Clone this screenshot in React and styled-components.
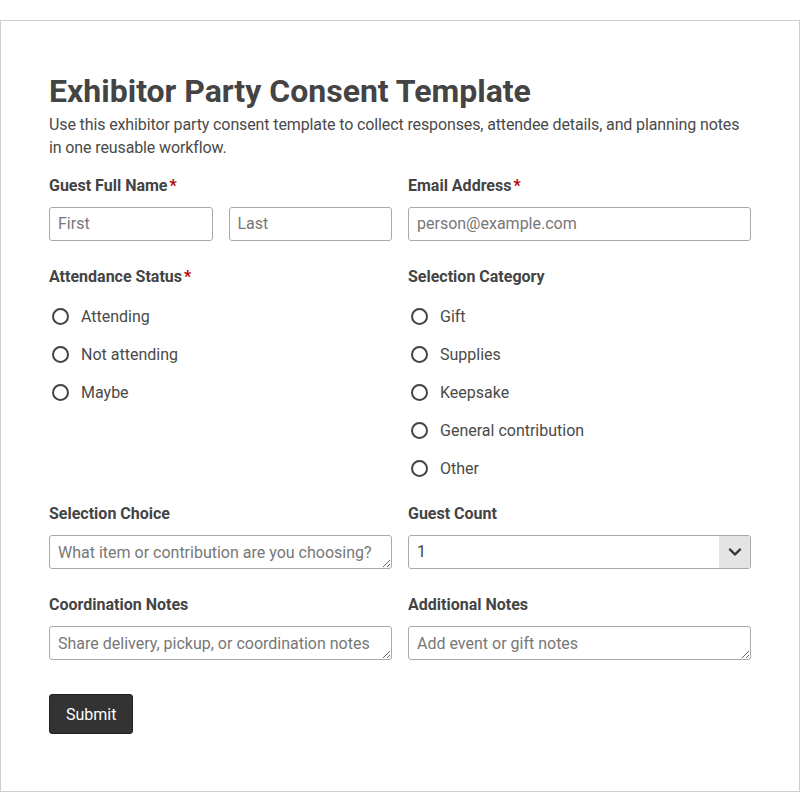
import React from 'react';
import styled, { createGlobalStyle } from 'styled-components';

const GlobalStyle = createGlobalStyle`
  * { box-sizing: border-box; }
  body {
    margin: 0;
    background: #fff;
    font-family: Roboto, "Liberation Sans", Arial, sans-serif;
    color: #444;
  }
`;

const Page = styled.div`
  padding-top: 20px;
`;

const Card = styled.form`
  border: 1px solid #cfcfcf;
  padding: 51px 48px 57px;
  background: #fff;
`;

const Title = styled.h1`
  margin: 0 0 3px;
  font-size: 32px;
  line-height: 38px;
  font-weight: 700;
  color: #444;
`;

const Intro = styled.p`
  margin: 0 0 17px;
  font-size: 16px;
  line-height: 23px;
  letter-spacing: -0.12px;
  color: #4a4a4a;
`;

const Grid = styled.div`
  display: grid;
  grid-template-columns: 1fr 1fr;
  column-gap: 16px;
  row-gap: 16px;
`;

const Field = styled.div`
  display: flex;
  flex-direction: column;
`;

const Label = styled.label`
  display: block;
  font-size: 16px;
  line-height: 20px;
  font-weight: 700;
  color: #444;
  margin-bottom: ${({ $tight }) => ($tight ? '10px' : '11px')};
`;

const Star = styled.span`
  color: #b30000;
  margin-left: 2px;
`;

const Pair = styled.div`
  display: grid;
  grid-template-columns: 1fr 1fr;
  gap: 16px;
  margin-bottom: 10px;
`;

const Input = styled.input`
  display: block;
  width: 100%;
  height: 34px;
  margin: 0 0 ${({ $flush }) => ($flush ? '0' : '10px')};
  padding: 0 8px 1px;
  border: 1px solid #aaa;
  border-radius: 3px;
  font: inherit;
  font-size: 16px;
  color: #444;
  background: #fff;
  &::placeholder { color: #777; }
`;

const Area = styled.textarea`
  display: block;
  width: 100%;
  height: 34px;
  margin: 0 0 10px;
  padding: 7px 8px 5px;
  border: 1px solid #aaa;
  border-radius: 3px;
  font: inherit;
  font-size: 16px;
  line-height: 20px;
  color: #444;
  resize: vertical;
  overflow: hidden;
  &::placeholder { color: #777; }
`;

const SelectWrap = styled.div`
  position: relative;
  height: 34px;
  margin-bottom: 10px;
`;

const Select = styled.select`
  appearance: none;
  width: 100%;
  height: 34px;
  padding: 0 40px 1px 8px;
  border: 1px solid #aaa;
  border-radius: 3px;
  font: inherit;
  font-size: 16px;
  color: #444;
  background: #fff;
`;

const Arrow = styled.span`
  position: absolute;
  top: 1px;
  right: 1px;
  bottom: 1px;
  width: 31px;
  background: #e4e4e4;
  border-radius: 0 2px 2px 0;
  display: flex;
  align-items: center;
  justify-content: center;
  pointer-events: none;
`;

const Options = styled.div`
  display: flex;
  flex-direction: column;
  padding-bottom: 1px;
`;

const Option = styled.label`
  display: flex;
  align-items: center;
  height: 38px;
  font-size: 16px;
  color: #4a4a4a;
  cursor: pointer;
`;

const Radio = styled.input`
  appearance: none;
  width: 17px;
  height: 17px;
  margin: 0 12px 0 3px;
  border: 2px solid #444;
  border-radius: 50%;
  background: #fff;
  &:checked { box-shadow: inset 0 0 0 3px #fff; background: #444; }
`;

const Actions = styled.div`
  margin-top: 24px;
`;

const Button = styled.button`
  height: 40px;
  padding: 0 16px;
  border: 1px solid #222;
  border-radius: 3px;
  background: #333;
  color: #fff;
  font: inherit;
  font-size: 16px;
  cursor: pointer;
`;

const Chevron = () => (
  <svg width="14" height="14" viewBox="0 0 14 14">
    <path d="M2 4.5 L7 9.5 L12 4.5" fill="none" stroke="#333" strokeWidth="2.4" strokeLinecap="round" strokeLinejoin="round" />
  </svg>
);

const RadioGroup = ({ name, items }) => (
  <Options>
    {items.map((item) => (
      <Option key={item}>
        <Radio type="radio" name={name} value={item} />
        {item}
      </Option>
    ))}
  </Options>
);

const App = () => (
  <Page>
    <GlobalStyle />
    <Card onSubmit={(e) => e.preventDefault()}>
      <Title>Exhibitor Party Consent Template</Title>
      <Intro>
        Use this exhibitor party consent template to collect responses, attendee details, and planning notes in one reusable workflow.
      </Intro>
      <Grid>
        <Field>
          <Label>Guest Full Name<Star>*</Star></Label>
          <Pair>
            <Input $flush placeholder="First" />
            <Input $flush placeholder="Last" />
          </Pair>
        </Field>
        <Field>
          <Label>Email Address<Star>*</Star></Label>
          <Input type="email" placeholder="person@example.com" />
        </Field>

        <Field>
          <Label $tight>Attendance Status<Star>*</Star></Label>
          <RadioGroup name="attendance" items={['Attending', 'Not attending', 'Maybe']} />
        </Field>
        <Field>
          <Label $tight>Selection Category</Label>
          <RadioGroup name="category" items={['Gift', 'Supplies', 'Keepsake', 'General contribution', 'Other']} />
        </Field>

        <Field>
          <Label>Selection Choice</Label>
          <Area rows={1} placeholder="What item or contribution are you choosing?" />
        </Field>
        <Field>
          <Label>Guest Count</Label>
          <SelectWrap>
            <Select defaultValue="1">
              {[1, 2, 3, 4, 5].map((n) => (
                <option key={n} value={n}>{n}</option>
              ))}
            </Select>
            <Arrow><Chevron /></Arrow>
          </SelectWrap>
        </Field>

        <Field>
          <Label>Coordination Notes</Label>
          <Area rows={1} placeholder="Share delivery, pickup, or coordination notes" />
        </Field>
        <Field>
          <Label>Additional Notes</Label>
          <Area rows={1} placeholder="Add event or gift notes" />
        </Field>
      </Grid>
      <Actions>
        <Button type="submit">Submit</Button>
      </Actions>
    </Card>
  </Page>
);

export default App;
